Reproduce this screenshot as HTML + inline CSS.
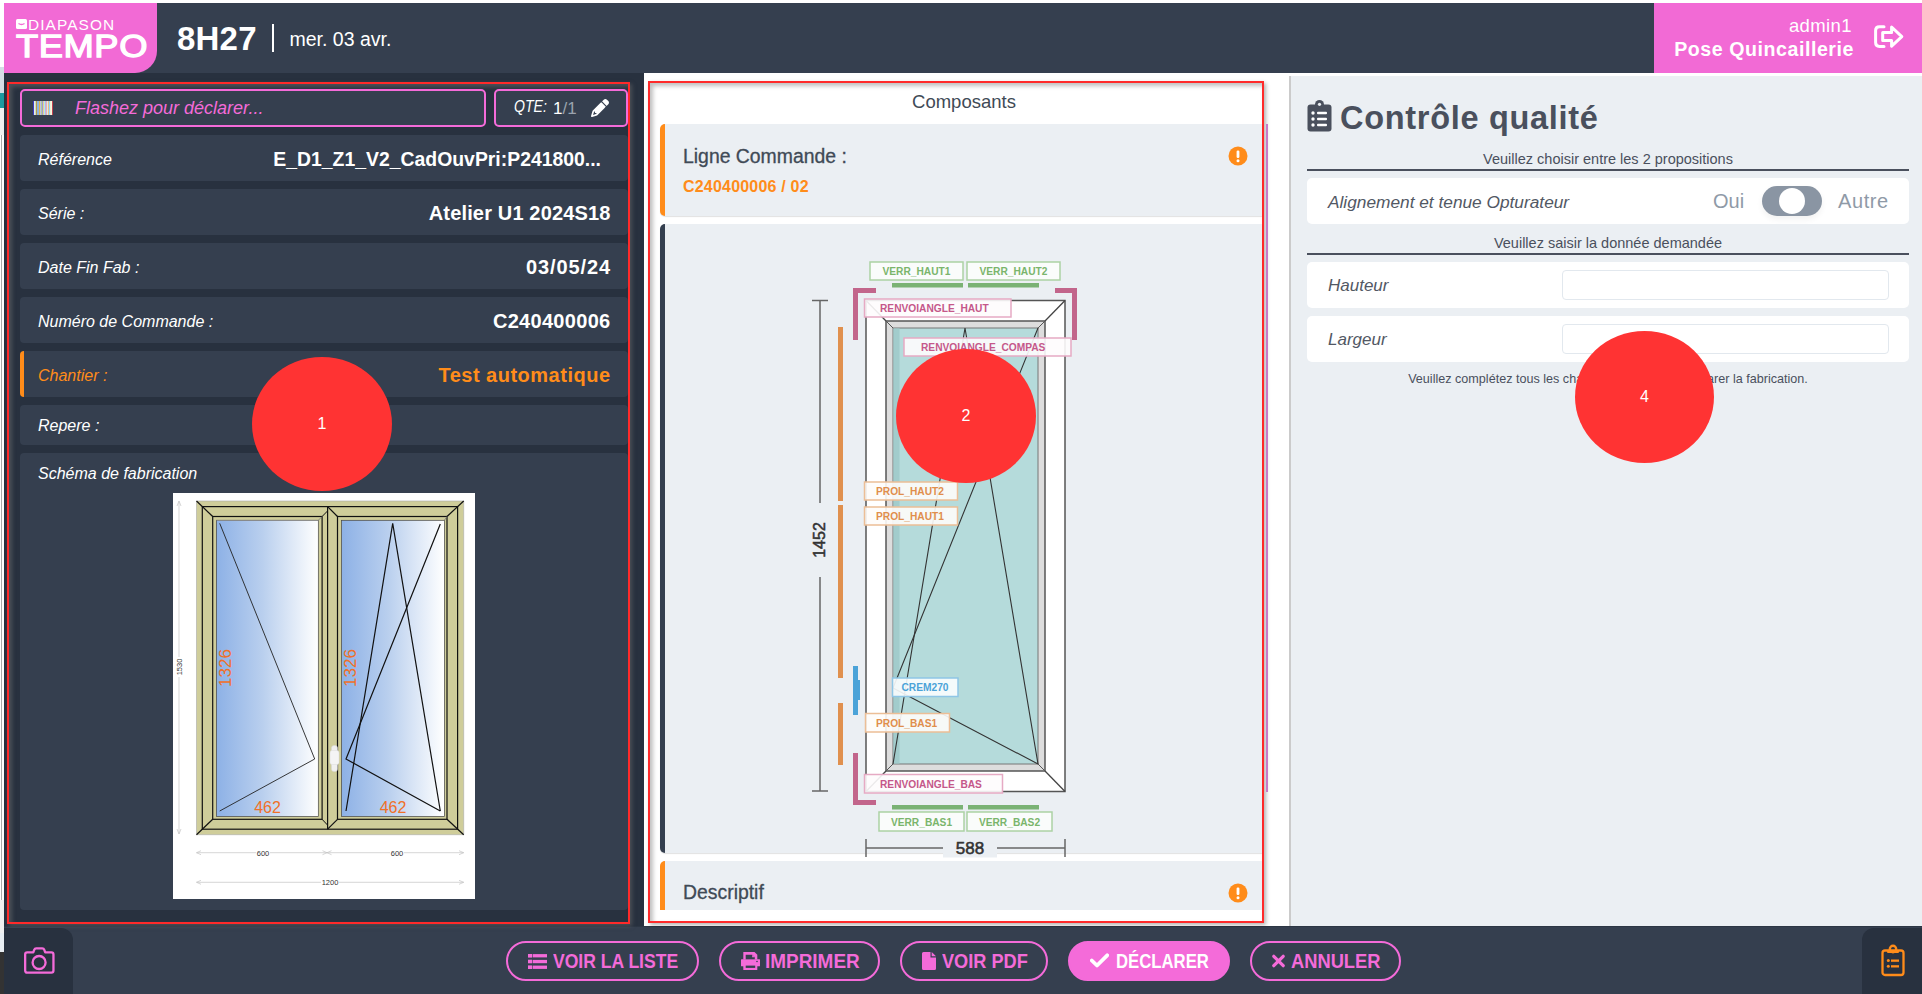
<!DOCTYPE html>
<html><head><meta charset="utf-8">
<style>
*{box-sizing:border-box;margin:0;padding:0}
html,body{width:1922px;height:994px;overflow:hidden;background:#fff;font-family:"Liberation Sans",sans-serif}
.abs{position:absolute}
#strip{left:0;top:0;width:4px;height:994px;background:#fff}
#hdr{left:4px;top:3px;width:1918px;height:70px;background:#353f4f}
#logo{left:4px;top:3px;width:153px;height:70px;background:#f26ad5;border-bottom-right-radius:22px}
#user{left:1654px;top:3px;width:268px;height:70px;background:#f26ad5}
#body{left:4px;top:73px;width:640px;height:853px;background:#28313f}
#mid{left:644px;top:73px;width:646px;height:853px;background:#fff}
#right{left:1289px;top:76px;width:633px;height:852px;background:#ebeff3;border-left:2px solid #cbcbcb;border-bottom:1px solid #f8fbfd}
#foot{left:4px;top:926px;width:1918px;height:68px;border-top:1px solid #2c3644;background:#353f4f}
.red{border:2px solid #ff2a2a}
.row{position:absolute;left:20px;width:608px;background:#353f4f;border-radius:4px;color:#fff}
.lbl{position:absolute;left:18px;font-style:italic;font-size:16px;color:#fff}
.val{position:absolute;right:18px;font-weight:bold;font-size:20px;color:#fff;white-space:nowrap}
.btn{position:absolute;top:941px;height:40px;border:2px solid #f46bd9;border-radius:20px;color:#f46bd9;font-weight:bold;font-size:18px;display:flex;align-items:center;justify-content:center;gap:8px}
.btxt{top:950px;font-size:20px;font-weight:bold;color:#f46bd9;line-height:22px;white-space:nowrap;transform-origin:left top}
.circ{position:absolute;width:139px;height:134px;border-radius:50%;background:#ff3333;color:#fff;font-size:16px;display:flex;align-items:center;justify-content:center}
</style></head><body>
<div id="strip" class="abs"></div>
<div class="abs" style="left:0;top:67px;width:4px;height:26px;background:#d5dee6"></div>
<div class="abs" style="left:0;top:93px;width:4px;height:15px;background:#1a9aa0"></div>
<div class="abs" style="left:0;top:108px;width:4px;height:27px;background:#f0f0f0"></div>
<div class="abs" style="left:0;top:135px;width:2px;height:765px;background:#fff;border-right:1px solid #aaa"></div>
<div class="abs" style="left:0;top:900px;width:4px;height:33px;background:#f0f0f0"></div>
<div class="abs" style="left:0;top:933px;width:4px;height:19px;background:#e8eef3"></div>
<div class="abs" style="left:0;top:952px;width:4px;height:42px;background:#333"></div>
<div id="hdr" class="abs"></div>
<div id="logo" class="abs"></div>
<div id="user" class="abs"></div>
<div id="body" class="abs"></div>
<div id="mid" class="abs"></div>
<div id="right" class="abs"></div>
<div id="foot" class="abs"></div>

<!-- HEADER -->
<svg class="abs" style="left:16px;top:19px" width="11" height="10" viewBox="0 0 11 10"><rect x="0" y="0" width="11" height="10" rx="1.5" fill="#fff"/><path d="M2.5 4.5 Q5.5 6.5 8.5 4.5" stroke="#f26ad5" stroke-width="1.3" fill="none"/></svg>
<div class="abs" id="diap" style="left:28px;top:18px;font-size:14px;color:#fff;letter-spacing:1px;line-height:14px;transform:scale(1.1,1);transform-origin:top left">DIAPASON</div>
<div class="abs" id="tempo" style="left:16px;top:30px;font-size:32px;font-weight:normal;-webkit-text-stroke:1.3px #fff;color:#fff;letter-spacing:0.5px;line-height:32px;transform:scale(1.135,1);transform-origin:top left">TEMPO</div>
<div class="abs" style="left:177px;top:21px;font-size:33px;font-weight:bold;color:#fff;line-height:36px;letter-spacing:0.2px">8H27</div>
<div class="abs" style="left:272px;top:24px;width:1.5px;height:28px;background:#fff"></div>
<div class="abs" style="left:289.5px;top:27.5px;font-size:19.5px;color:#fff;line-height:22px">mer. 03 avr.</div>
<div class="abs" style="left:1660px;top:15px;width:192px;text-align:right;font-size:18.5px;color:#fff;line-height:22px;letter-spacing:0.4px">admin1</div>
<div class="abs" style="left:1600px;top:37px;width:254px;text-align:right;font-size:19.6px;font-weight:bold;color:#fff;line-height:24px;letter-spacing:0.55px">Pose Quincaillerie</div>
<svg class="abs" style="left:1870px;top:20px" width="40" height="34" viewBox="0 0 40 34"><path d="M14 6.7 H9.5 Q5.6 6.7 5.6 10.5 V22.6 Q5.6 26.4 9.5 26.4 H14" stroke="#fff" stroke-width="3" fill="none" stroke-linecap="round"/><path d="M12.7 12.5 H21.6 V7 L31.8 16.6 L21.6 26.2 V20.5 H12.7 Z" stroke="#fff" stroke-width="3" fill="none" stroke-linejoin="round"/></svg>
<!-- LEFT PANEL -->
<div class="abs" style="left:9px;top:84px;width:619px;height:838px;box-shadow:inset 3px 3px 4px rgba(120,120,120,.45)"></div>
<div class="abs" style="left:7px;top:82px;width:623px;height:842px;box-shadow:2px 2px 4px rgba(110,110,110,.5)"></div>
<div class="abs red" style="left:7px;top:82px;width:623px;height:842px"></div>
<div class="abs" style="left:20px;top:89px;width:466px;height:38px;border:2px solid #f46bd9;border-radius:5px;background:#353f4f"></div>
<svg class="abs" style="left:33px;top:101px" width="20" height="14" viewBox="0 0 20 14"><rect x="0.00" y="0" width="1.05" height="14" fill="#3a3ac8"/><rect x="1.00" y="0" width="1.05" height="14" fill="#e8ece8"/><rect x="2.00" y="0" width="1.05" height="14" fill="#c8e0c8"/><rect x="3.00" y="0" width="1.05" height="14" fill="#b8964a"/><rect x="4.00" y="0" width="1.05" height="14" fill="#8ab4e0"/><rect x="5.00" y="0" width="1.05" height="14" fill="#8ab4e0"/><rect x="6.00" y="0" width="1.05" height="14" fill="#e0b050"/><rect x="7.00" y="0" width="1.05" height="14" fill="#c0c0e8"/><rect x="8.00" y="0" width="1.05" height="14" fill="#b0cc90"/><rect x="9.00" y="0" width="1.05" height="14" fill="#9898d8"/><rect x="10.00" y="0" width="1.05" height="14" fill="#e8d090"/><rect x="11.00" y="0" width="1.05" height="14" fill="#b0e8f0"/><rect x="12.00" y="0" width="1.05" height="14" fill="#c0b0e0"/><rect x="13.00" y="0" width="1.05" height="14" fill="#e8b0b0"/><rect x="14.00" y="0" width="1.05" height="14" fill="#d8e8f0"/><rect x="15.00" y="0" width="1.05" height="14" fill="#e8c080"/><rect x="16.00" y="0" width="1.05" height="14" fill="#90d0f8"/><rect x="17.00" y="0" width="1.05" height="14" fill="#f0f0d8"/><rect x="18.00" y="0" width="1.05" height="14" fill="#f8f8e0"/><rect x="19.00" y="0" width="1.05" height="14" fill="#c04050"/></svg>
<div class="abs" style="left:75px;top:98px;font-size:18px;font-style:italic;color:#f46bd9;white-space:nowrap">Flashez pour déclarer...</div>
<div class="abs" style="left:494px;top:89px;width:134px;height:38px;border:2px solid #f46bd9;border-radius:5px;background:#353f4f"></div>
<div class="abs" style="left:514px;top:98px;font-size:16px;color:#fff;white-space:nowrap;font-style:italic;letter-spacing:0px;transform:scaleX(0.88);transform-origin:left top">QTE:</div><div class="abs" style="left:553px;top:99px;font-size:17px;color:#fff;white-space:nowrap">1<span style="color:#9aa3ae">/1</span></div>
<svg class="abs" style="left:591px;top:99px" width="18" height="18" viewBox="0 0 512 512"><path fill="#fff" d="M410.3 231l11.3-11.3-33.9-33.9-62.1-62.1L291.7 89.8l-11.3 11.3-22.6 22.6L58.6 322.9c-10.4 10.4-18 23.3-22.2 37.4L1 480.7c-2.5 8.4-.2 17.5 6.1 23.7s15.3 8.5 23.7 6.1l120.3-35.4c14.1-4.2 27-11.8 37.4-22.2L387.7 253.7 410.3 231zM160 399.4l-9.1 22.7c-4 3.1-8.5 5.4-13.3 6.9L59.4 452l23-78.1c1.4-4.9 3.8-9.4 6.9-13.3l22.7-9.1v32c0 8.8 7.2 16 16 16h32zM362.7 18.7L348.3 33.2 325.7 55.8 314.3 67.1l33.9 33.9 62.1 62.1 33.9 33.9 11.3-11.3 22.6-22.6 14.5-14.5c25-25 25-65.5 0-90.5L453.3 18.7c-25-25-65.5-25-90.5 0z"/></svg>

<div class="row" style="top:135px;height:46px"><div class="lbl" style="top:16px">Référence</div><div class="val" style="top:13px;right:27px;font-size:19.4px">E_D1_Z1_V2_CadOuvPri:P241800...</div></div>
<div class="row" style="top:189px;height:46px"><div class="lbl" style="top:16px">Série :</div><div class="val" style="top:13px;letter-spacing:0.15px;right:17.5px">Atelier U1 2024S18</div></div>
<div class="row" style="top:243px;height:46px"><div class="lbl" style="top:16px">Date Fin Fab :</div><div class="val" style="top:13px;letter-spacing:0.9px;right:17px">03/05/24</div></div>
<div class="row" style="top:297px;height:46px"><div class="lbl" style="top:15.5px">Numéro de Commande :</div><div class="val" style="top:13px;letter-spacing:0.3px;right:17.5px">C240400006</div></div>
<div class="row" style="top:351px;height:46px;border-left:4px solid #ff8c1a"><div class="lbl" style="top:16px;left:14px;color:#ff8c1a">Chantier :</div><div class="val" style="top:13px;color:#ff8c1a;letter-spacing:0.5px;right:17.5px">Test automatique</div></div>
<div class="row" style="top:405px;height:40px"><div class="lbl" style="top:12px">Repere :</div></div>
<div class="row" style="top:453px;height:457px"><div class="lbl" style="top:12px">Schéma de fabrication</div></div>
<svg class="abs" style="left:173px;top:493px" width="302" height="406" viewBox="173 493 302 406" font-family="Liberation Sans">
<defs><linearGradient id="gl" x1="0" x2="1" y1="0" y2="0"><stop offset="0" stop-color="#8db1e6"/><stop offset="0.45" stop-color="#b9cfee"/><stop offset="1" stop-color="#ffffff"/></linearGradient></defs>
<rect x="173" y="493" width="302" height="406" fill="#fff"/>
<!-- outer frame -->
<rect x="196.5" y="501" width="267.2" height="333.7" fill="#cfcd9a"/>
<path d="M196.5 501 H463.7 V834.7 H196.5 Z" fill="none" stroke="#aaa" stroke-width="0.6"/>
<rect x="202.3" y="506.6" width="255.3" height="322.6" fill="none" stroke="#111" stroke-width="1.2"/>
<line x1="196.5" y1="501" x2="212.7" y2="516.5" stroke="#111" stroke-width="1.2"/>
<line x1="463.7" y1="501" x2="447" y2="516.5" stroke="#111" stroke-width="1.2"/>
<line x1="196.5" y1="834.7" x2="212.7" y2="819.3" stroke="#111" stroke-width="1.2"/>
<line x1="463.7" y1="834.7" x2="447" y2="819.3" stroke="#111" stroke-width="1.2"/>
<!-- left sash -->
<rect x="212.7" y="516.5" width="109.4" height="302.8" fill="none" stroke="#111" stroke-width="1.2"/>
<rect x="216.4" y="520.3" width="101.9" height="296.1" fill="url(#gl)" stroke="#444" stroke-width="0.7"/>
<line x1="216.4" y1="520.3" x2="318.3" y2="520.3" stroke="#999" stroke-width="0.8"/>
<line x1="322.1" y1="516.5" x2="327.5" y2="511" stroke="#111" stroke-width="1"/>
<line x1="322.1" y1="819.3" x2="327.5" y2="825" stroke="#111" stroke-width="1"/>
<line x1="318.3" y1="520.3" x2="322.1" y2="516.5" stroke="#777" stroke-width="0.8"/>
<!-- mullion / right sash -->
<line x1="327.6" y1="506.6" x2="327.6" y2="829.2" stroke="#111" stroke-width="1.2"/>
<rect x="337.5" y="516.5" width="109.5" height="302.8" fill="none" stroke="#111" stroke-width="1.2"/>
<rect x="341.6" y="520.3" width="102.8" height="296.1" fill="url(#gl)" stroke="#444" stroke-width="0.7"/>
<line x1="327.6" y1="506.6" x2="337.5" y2="516.5" stroke="#111" stroke-width="1.2"/>
<line x1="327.6" y1="829.2" x2="337.5" y2="819.3" stroke="#111" stroke-width="1.2"/>
<line x1="444.4" y1="520.3" x2="447" y2="516.5" stroke="#777" stroke-width="0.8"/>
<!-- opening lines -->
<polyline points="219.7,523.3 314.7,759 219.7,811" fill="none" stroke="#222" stroke-width="0.9"/>
<polyline points="346,811 392.7,523.3 440.3,811" fill="none" stroke="#111" stroke-width="1.2"/>
<polyline points="440.3,524 346,759 440.3,811" fill="none" stroke="#111" stroke-width="1.2"/>
<!-- handle -->
<rect x="331.5" y="745.5" width="6" height="26" rx="2.5" fill="#f0f0f0" stroke="#d8d8d8" stroke-width="0.5"/>
<rect x="330" y="750.5" width="9" height="14" rx="2" fill="#f4f4f4" stroke="#ddd" stroke-width="0.5"/>
<!-- dims text -->
<text x="0" y="0" transform="translate(231.4 668) rotate(-90)" text-anchor="middle" font-size="17" fill="#f07028">1326</text>
<text x="0" y="0" transform="translate(356.3 668) rotate(-90)" text-anchor="middle" font-size="17" fill="#f07028">1326</text>
<text x="267.5" y="813" text-anchor="middle" font-size="16" fill="#f07028">462</text>
<text x="393" y="813" text-anchor="middle" font-size="16" fill="#f07028">462</text>
<!-- dimension lines -->
<g stroke="#c4c4c4" stroke-width="0.7" fill="none">
<line x1="179" y1="501" x2="179" y2="657"/><line x1="179" y1="677" x2="179" y2="834"/>
<polyline points="177,506 179,501 181,506"/><polyline points="177,829 179,834 181,829"/>
<line x1="196.5" y1="852.7" x2="256" y2="852.7"/><line x1="270" y1="852.7" x2="390" y2="852.7"/>
<line x1="404" y1="852.7" x2="463.7" y2="852.7"/>
<polyline points="201,850.7 196.5,852.7 201,854.7"/><polyline points="322.5,850.7 327,852.7 322.5,854.7"/>
<polyline points="331.5,850.7 327,852.7 331.5,854.7"/><polyline points="459,850.7 463.7,852.7 459,854.7"/>
<line x1="196.5" y1="882.3" x2="321" y2="882.3"/><line x1="339" y1="882.3" x2="463.7" y2="882.3"/>
<polyline points="201,880.3 196.5,882.3 201,884.3"/><polyline points="459,880.3 463.7,882.3 459,884.3"/>
</g>
<g font-size="7.5" fill="#333" text-anchor="middle">
<text x="263" y="855.5">600</text><text x="397" y="855.5">600</text><text x="330" y="885">1200</text>
<text x="0" y="0" transform="translate(181.5 667) rotate(-90)">1530</text>
</g>
</svg>



<!-- MIDDLE PANEL -->
<div class="abs" style="left:650px;top:83px;width:612px;height:838px;box-shadow:inset 3px 3px 4px rgba(0,0,0,.25)"></div>
<div class="abs" style="left:648px;top:81px;width:616px;height:842px;box-shadow:2px 2px 4px rgba(0,0,0,.3)"></div>
<div class="abs red" style="left:648px;top:81px;width:616px;height:842px"></div>
<div class="abs" style="left:648px;top:91px;width:632px;text-align:center;font-size:18.5px;color:#404a56;line-height:22px">Composants</div>
<div class="abs" style="left:1266px;top:124px;width:2px;height:668px;background:#c879c8"></div>
<div class="abs" style="left:660px;top:124px;width:602px;height:92px;background:#ebeff3;border-left:5px solid #ff8c1a;border-radius:5px 0 0 5px;box-shadow:0 1px 1px rgba(0,0,0,.12)"></div>
<div class="abs" style="left:683px;top:144px;font-size:19.4px;color:#404a56;line-height:24px;-webkit-text-stroke:0.3px #404a56">Ligne Commande :</div>
<div class="abs" style="left:683px;top:177px;font-size:16px;font-weight:bold;color:#ff8c1a;line-height:20px;letter-spacing:0.2px">C240400006 / 02</div>
<svg class="abs" style="left:1228px;top:146px" width="20" height="20" viewBox="0 0 20 20"><circle cx="10" cy="10" r="9.5" fill="#ff8c1a"/><rect x="8.6" y="4.5" width="2.8" height="7.5" rx="1.2" fill="#fff"/><circle cx="10" cy="14.8" r="1.5" fill="#fff"/></svg>
<div class="abs" style="left:660px;top:224px;width:602px;height:629px;background:#ebeff3;border-left:5px solid #343f4f;border-radius:5px 0 0 5px;box-shadow:0 1px 1px rgba(0,0,0,.12)"></div>
<div class="abs" style="left:660px;top:861px;width:602px;height:49px;background:#ebeff3;border-left:5px solid #ff8c1a;border-radius:5px 0 0 0"></div>
<div class="abs" style="left:683px;top:880px;font-size:19.4px;color:#404a56;line-height:24px;-webkit-text-stroke:0.3px #404a56">Descriptif</div>
<svg class="abs" style="left:1228px;top:883px" width="20" height="20" viewBox="0 0 20 20"><circle cx="10" cy="10" r="9.5" fill="#ff8c1a"/><rect x="8.6" y="4.5" width="2.8" height="7.5" rx="1.2" fill="#fff"/><circle cx="10" cy="14.8" r="1.5" fill="#fff"/></svg>
<svg class="abs" style="left:0;top:0" width="1922" height="994" viewBox="0 0 1922 994" font-family="Liberation Sans" font-weight="bold">
<!-- frame -->
<rect x="866" y="300.5" width="199" height="491" fill="#fff" stroke="#555" stroke-width="1.5"/>
<rect x="886" y="321" width="159" height="450" fill="#ddd" stroke="#555" stroke-width="1.5"/>
<rect x="893" y="328" width="145" height="436" fill="#b5dbdb" stroke="#777" stroke-width="1"/>
<rect x="893.5" y="328.5" width="6" height="435" fill="#a2cccc"/>
<line x1="866" y1="300.5" x2="886" y2="321" stroke="#444" stroke-width="1.3"/>
<line x1="1065" y1="300.5" x2="1045" y2="321" stroke="#444" stroke-width="1.3"/>
<line x1="866" y1="791.5" x2="886" y2="771" stroke="#444" stroke-width="1.3"/>
<line x1="1065" y1="791.5" x2="1045" y2="771" stroke="#444" stroke-width="1.3"/>
<line x1="886" y1="771" x2="893" y2="764" stroke="#555" stroke-width="1"/>
<line x1="1045" y1="771" x2="1038" y2="764" stroke="#555" stroke-width="1"/>
<line x1="886" y1="321" x2="893" y2="328" stroke="#555" stroke-width="1"/>
<line x1="1045" y1="321" x2="1038" y2="328" stroke="#555" stroke-width="1"/>
<!-- opening lines -->
<polyline points="893,764 965,328 1038,764" fill="none" stroke="#333" stroke-width="1.1"/>
<polyline points="1038,328 893,688 1038,764" fill="none" stroke="#333" stroke-width="1.1"/>
<!-- dims -->
<line x1="820" y1="300.5" x2="820" y2="503" stroke="#666" stroke-width="1.5"/>
<line x1="820" y1="577" x2="820" y2="791" stroke="#666" stroke-width="1.5"/>
<line x1="812" y1="300.5" x2="828" y2="300.5" stroke="#666" stroke-width="1.5"/>
<line x1="812" y1="791" x2="828" y2="791" stroke="#666" stroke-width="1.5"/>
<text x="825" y="540" transform="rotate(-90 825 540)" text-anchor="middle" font-size="16" font-weight="normal" stroke="#333" stroke-width="0.5" fill="#333">1452</text>
<line x1="866" y1="848" x2="943" y2="848" stroke="#666" stroke-width="1.5"/>
<line x1="997" y1="848" x2="1065" y2="848" stroke="#666" stroke-width="1.5"/>
<line x1="866" y1="839" x2="866" y2="857" stroke="#666" stroke-width="1.5"/>
<line x1="1065" y1="839" x2="1065" y2="857" stroke="#666" stroke-width="1.5"/>
<rect x="943" y="840" width="54" height="17.5" fill="#ebeff3"/><text x="970" y="854" text-anchor="middle" font-size="17" font-weight="normal" stroke="#333" stroke-width="0.55" fill="#333">588</text>
<!-- bars -->
<rect x="838" y="327" width="5" height="174" fill="#e0904e"/>
<rect x="838" y="505" width="5" height="173" fill="#e0904e"/>
<rect x="838" y="703" width="5" height="62" fill="#e0904e"/>
<rect x="853" y="666" width="5" height="49" fill="#4ba3d8"/>
<rect x="858" y="680" width="2" height="20" fill="#4ba3d8"/>
<path d="M853 340 V288 H876 V293 H858 V340 Z" fill="#c2658b"/>
<path d="M1077 340 V288 H1055 V293 H1072 V340 Z" fill="#c2658b"/>
<path d="M853 753 V805 H876 V800 H858 V753 Z" fill="#c2658b"/>
<rect x="892" y="283" width="71" height="4.5" fill="#7ab274"/>
<rect x="968" y="283" width="71" height="4.5" fill="#7ab274"/>
<rect x="892" y="805" width="71" height="4.5" fill="#7ab274"/>
<rect x="968" y="805" width="71" height="4.5" fill="#7ab274"/>
<!-- labels -->
<g font-size="10.2">
<rect x="870" y="262" width="93" height="18" fill="#fcfdfc" fill-opacity=".9" stroke="#acd2a4" stroke-width="1.5"/>
<text x="916.5" y="275" text-anchor="middle" fill="#7ab56c">VERR_HAUT1</text>
<rect x="967" y="262" width="93" height="18" fill="#fcfdfc" fill-opacity=".9" stroke="#acd2a4" stroke-width="1.5"/>
<text x="1013.5" y="275" text-anchor="middle" fill="#7ab56c">VERR_HAUT2</text>
<rect x="864.5" y="299" width="146.5" height="18" fill="#fefcfd" fill-opacity=".9" stroke="#e6aac4" stroke-width="1.5"/>
<text x="880" y="312" fill="#c5588a">RENVOIANGLE_HAUT</text>
<rect x="904" y="338" width="167" height="18" fill="#fefcfd" fill-opacity=".9" stroke="#e6aac4" stroke-width="1.5"/>
<text x="921" y="351" fill="#c5588a">RENVOIANGLE_COMPAS</text>
<rect x="864.5" y="482" width="93" height="18" fill="#fefcfa" fill-opacity=".9" stroke="#ecbe96" stroke-width="1.5"/>
<text x="876" y="495" fill="#e08e4c">PROL_HAUT2</text>
<rect x="864.5" y="507" width="93" height="18" fill="#fefcfa" fill-opacity=".9" stroke="#ecbe96" stroke-width="1.5"/>
<text x="876" y="520" fill="#e08e4c">PROL_HAUT1</text>
<rect x="892.5" y="678" width="65.5" height="18.5" fill="#fbfdfe" fill-opacity=".9" stroke="#8fc6e6" stroke-width="1.5"/>
<text x="925" y="691" text-anchor="middle" fill="#4ba3d8">CREM270</text>
<rect x="865.5" y="713.5" width="84" height="18.5" fill="#fefcfa" fill-opacity=".9" stroke="#ecbe96" stroke-width="1.5"/>
<text x="876" y="727" fill="#e08e4c">PROL_BAS1</text>
<rect x="864.5" y="774.5" width="138" height="18.5" fill="#fefcfd" fill-opacity=".9" stroke="#e6aac4" stroke-width="1.5"/>
<text x="880" y="788" fill="#c5588a">RENVOIANGLE_BAS</text>
<rect x="879" y="812" width="85" height="19" fill="#fcfdfc" fill-opacity=".9" stroke="#acd2a4" stroke-width="1.5"/>
<text x="921.5" y="825.5" text-anchor="middle" fill="#7ab56c">VERR_BAS1</text>
<rect x="967" y="812" width="85" height="19" fill="#fcfdfc" fill-opacity=".9" stroke="#acd2a4" stroke-width="1.5"/>
<text x="1009.5" y="825.5" text-anchor="middle" fill="#7ab56c">VERR_BAS2</text>
</g>
</svg>

<!-- RIGHT PANEL -->
<svg class="abs" style="left:1307px;top:100px" width="25" height="32" viewBox="0 0 25 32"><rect x="0.5" y="4.5" width="24" height="27" rx="3" fill="#4a505d"/><circle cx="12.5" cy="4.5" r="4.5" fill="#4a505d"/><circle cx="12.5" cy="4.3" r="1.6" fill="#ebeff3"/><circle cx="6" cy="13" r="1.7" fill="#fff"/><circle cx="6" cy="19" r="1.7" fill="#fff"/><circle cx="6" cy="25" r="1.7" fill="#fff"/><rect x="10" y="11.8" width="10" height="2.4" rx="1" fill="#fff"/><rect x="10" y="17.8" width="10" height="2.4" rx="1" fill="#fff"/><rect x="10" y="23.8" width="10" height="2.4" rx="1" fill="#fff"/></svg>
<div class="abs" style="left:1340px;top:98.5px;font-size:32.5px;font-weight:bold;color:#4a505d;line-height:38px;white-space:nowrap;letter-spacing:0.7px">Contrôle qualité</div>
<div class="abs" style="left:1307px;top:150px;width:602px;text-align:center;font-size:14.5px;color:#4a505d;line-height:18px">Veuillez choisir entre les 2 propositions</div>
<div class="abs" style="left:1307px;top:169px;width:602px;height:1.5px;background:#4a505d"></div>
<div class="abs" style="left:1307px;top:178px;width:602px;height:46px;background:#fff;border-radius:5px"></div>
<div class="abs" style="left:1328px;top:191px;font-size:17.3px;font-style:italic;color:#525864;line-height:22px;white-space:nowrap">Alignement et tenue Opturateur</div>
<div class="abs" style="left:1713px;top:189px;font-size:20px;color:#8f9aa7;line-height:24px">Oui</div>
<div class="abs" style="left:1762px;top:186px;width:60px;height:30px;border-radius:15px;background:#8a95a3;box-shadow:0 3px 6px rgba(0,0,0,.06)"></div>
<div class="abs" style="left:1779px;top:188px;width:26px;height:26px;border-radius:50%;background:#fff"></div>
<div class="abs" style="left:1838px;top:189px;font-size:20px;color:#8f9aa7;line-height:24px;letter-spacing:0.6px">Autre</div>
<div class="abs" style="left:1307px;top:234px;width:602px;text-align:center;font-size:14.5px;color:#4a505d;line-height:18px">Veuillez saisir la donnée demandée</div>
<div class="abs" style="left:1307px;top:253px;width:602px;height:1.5px;background:#4a505d"></div>
<div class="abs" style="left:1307px;top:262px;width:602px;height:46px;background:#fff;border-radius:5px"></div>
<div class="abs" style="left:1328px;top:275px;font-size:17px;font-style:italic;color:#525864;line-height:22px">Hauteur</div>
<div class="abs" style="left:1562px;top:270px;width:327px;height:30px;border:1.5px solid #e2e8ee;border-radius:4px;background:#fff"></div>
<div class="abs" style="left:1307px;top:316px;width:602px;height:46px;background:#fff;border-radius:5px"></div>
<div class="abs" style="left:1328px;top:329px;font-size:17px;font-style:italic;color:#525864;line-height:22px">Largeur</div>
<div class="abs" style="left:1562px;top:324px;width:327px;height:30px;border:1.5px solid #e2e8ee;border-radius:4px;background:#fff"></div>
<div class="abs" style="left:1307px;top:371px;width:602px;text-align:center;font-size:12.6px;color:#4a505d;line-height:16px">Veuillez complétez tous les champs pour pouvoir déclarer la fabrication.</div>

<!-- FOOTER -->
<div class="abs" style="left:4px;top:928px;width:69px;height:66px;background:#28313f;border-top-right-radius:12px"></div>
<svg class="abs" style="left:23px;top:946px" width="34" height="30" viewBox="0 0 34 30"><path d="M4.2 6.45 H10.3 L11.2 3.8 Q11.7 2.35 13.2 2.35 H19.3 Q20.8 2.35 21.3 3.8 L22.2 6.45 H28.4 Q30.45 6.45 30.45 8.5 V24.6 Q30.45 26.65 28.4 26.65 H4.2 Q2.15 26.65 2.15 24.6 V8.5 Q2.15 6.45 4.2 6.45 Z" fill="none" stroke="#f46bd9" stroke-width="2.3" stroke-linejoin="round"/><circle cx="16.1" cy="16.5" r="6.5" fill="none" stroke="#f46bd9" stroke-width="2.3"/></svg>
<div class="abs" style="left:1862px;top:928px;width:60px;height:66px;background:#28313f;border-top-left-radius:12px"></div>
<svg class="abs" style="left:1880px;top:944px" width="26" height="34" viewBox="0 0 26 34"><rect x="2.5" y="6.5" width="21" height="24.5" rx="2.5" fill="none" stroke="#ff8c1a" stroke-width="2.3"/><circle cx="13" cy="5" r="3.2" fill="none" stroke="#ff8c1a" stroke-width="2.4"/><rect x="7" y="6.5" width="12" height="2.6" rx="1" fill="#ff8c1a"/><circle cx="8.3" cy="16.6" r="1.5" fill="#ff8c1a"/><rect x="11" y="15.5" width="8" height="2.3" fill="#ff8c1a"/><circle cx="8.3" cy="22.3" r="1.5" fill="#ff8c1a"/><rect x="11" y="21.2" width="8" height="2.3" fill="#ff8c1a"/></svg>
<div class="btn" style="left:506px;width:193px"></div>
<div class="btn" style="left:719px;width:161px"></div>
<div class="btn" style="left:900px;width:148px"></div>
<div class="btn" style="left:1068px;width:162px;background:#f46bd9;border-color:#f46bd9"></div>
<div class="btn" style="left:1250px;width:151px"></div>
<svg class="abs" style="left:528px;top:954px" width="19" height="15" viewBox="0 0 19 15"><rect x="0" y="0" width="4" height="3.6" fill="#f46bd9"/><rect x="4.6" y="0.1" width="14.4" height="3.3" fill="#f46bd9"/><rect x="0" y="5.7" width="4" height="3.6" fill="#f46bd9"/><rect x="4.6" y="5.9" width="14.4" height="3.3" fill="#f46bd9"/><rect x="0" y="11.4" width="4" height="3.6" fill="#f46bd9"/><rect x="4.6" y="11.6" width="14.4" height="3.3" fill="#f46bd9"/></svg>
<div class="abs btxt" id="b1" style="left:553px;transform:scaleX(0.8775)">VOIR LA LISTE</div>
<svg class="abs" style="left:740.5px;top:952px" width="19" height="18" viewBox="0 0 19 18"><path d="M2.3 0 H13.5 L16.3 2.8 V7.5 H2.3 Z" fill="#f46bd9"/><rect x="0" y="7.2" width="19" height="7" rx="0.5" fill="#f46bd9"/><rect x="2.3" y="13" width="14" height="5" fill="#f46bd9"/><path d="M4.7 2.7 H11.2 L13.8 5.3 V7.3 H4.7 Z" fill="#353f4f"/><path d="M11.2 2.7 V5.3 H13.8 Z" fill="#f46bd9"/><rect x="4.7" y="13.6" width="9.5" height="2.3" fill="#353f4f"/><circle cx="16" cy="9.5" r="0.8" fill="#353f4f"/></svg>
<div class="abs btxt" id="b2" style="left:765px;transform:scaleX(0.947)">IMPRIMER</div>
<svg class="abs" style="left:922px;top:952px" width="14" height="18" viewBox="0 0 14 18"><path d="M0 1.5 Q0 0 1.5 0 H8.5 V5.5 H14 V16.5 Q14 18 12.5 18 H1.5 Q0 18 0 16.5 Z" fill="#f46bd9"/><path d="M9.7 0 L14 4.3 H9.7 Z" fill="#f46bd9"/></svg>
<div class="abs btxt" id="b3" style="left:942px;transform:scaleX(0.908)">VOIR PDF</div>
<svg class="abs" style="left:1090px;top:953px" width="19" height="15" viewBox="0 0 19 15"><path d="M1.8 7.5 L7 12.5 L17.2 2.3" fill="none" stroke="#fff" stroke-width="3.8" stroke-linecap="round" stroke-linejoin="round"/></svg>
<div class="abs btxt" id="b4" style="left:1116px;color:#fff;transform:scaleX(0.8356)">DÉCLARER</div>
<svg class="abs" style="left:1271.5px;top:954px" width="13" height="14" viewBox="0 0 13 14"><path d="M1.8 2.3 L11.2 11.7 M11.2 2.3 L1.8 11.7" stroke="#f46bd9" stroke-width="3.2" stroke-linecap="round"/></svg>
<div class="abs btxt" id="b5" style="left:1291px;transform:scaleX(0.915)">ANNULER</div>

<!-- CIRCLES -->
<div class="circ" style="left:252px;top:357px;width:140px;height:134px">1</div>
<div class="circ" style="left:896px;top:349px;width:140px;height:134px">2</div>
<div class="circ" style="left:1575px;top:331px;width:139px;height:132px">4</div>
</body></html>
